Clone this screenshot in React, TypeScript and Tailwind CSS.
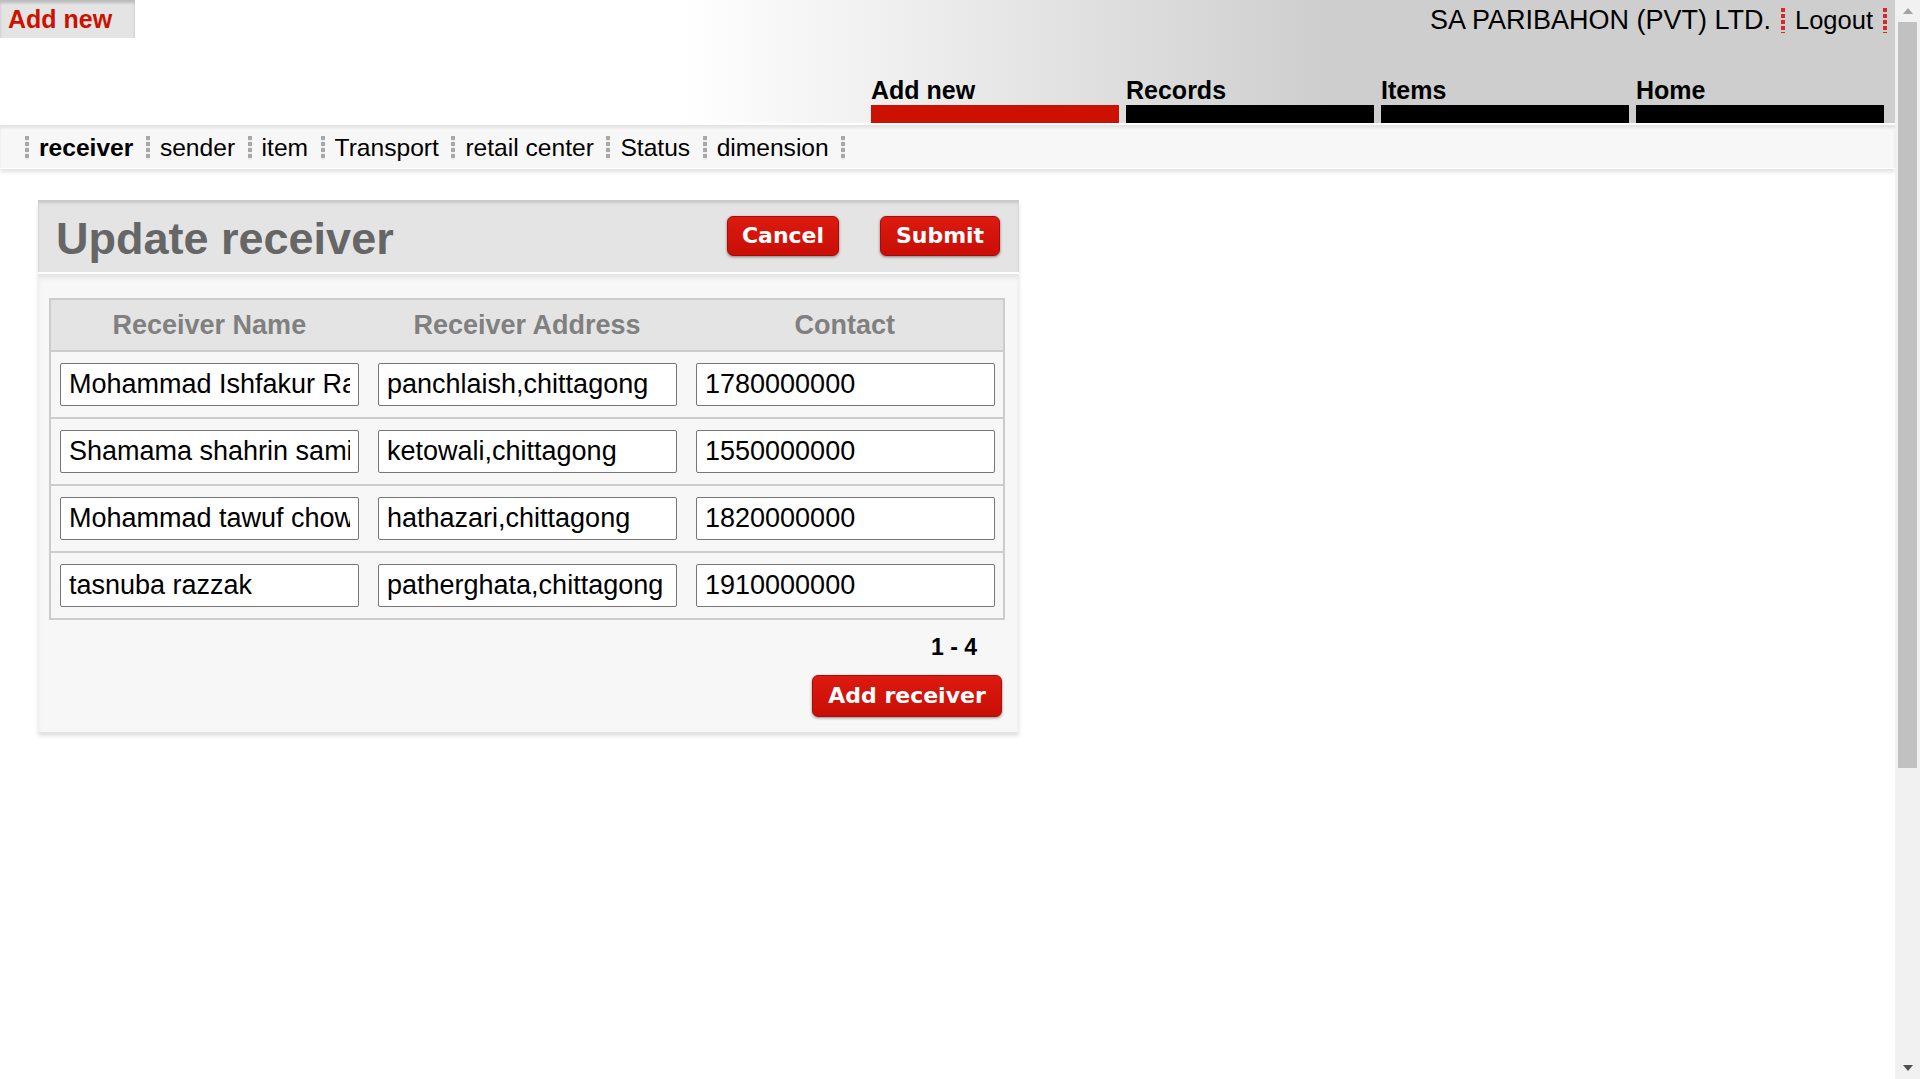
const arial = "font-['Liberation_Sans',Arial,sans-serif]";
const verdana = "font-['DejaVu_Sans',Verdana,sans-serif]";

const redSep =
  "w-[4px] h-[25px] bg-[image:repeating-linear-gradient(to_bottom,#d42a2a_0px,#d42a2a_4px,transparent_4px,transparent_6px)]";
const graySep =
  "w-[4px] h-[24px] shrink-0 bg-[image:repeating-linear-gradient(to_bottom,#a8a8a8_0px,#a8a8a8_4px,#eeeeee_4px,#eeeeee_6px)]";

const tabs = [
  { label: "Add new", active: true },
  { label: "Records", active: false },
  { label: "Items", active: false },
  { label: "Home", active: false },
];

const subnav = ["receiver", "sender", "item", "Transport", "retail center", "Status", "dimension"];

const receivers = [
  { name: "Mohammad Ishfakur Rahman", address: "panchlaish,chittagong", contact: "1780000000" },
  { name: "Shamama shahrin sami", address: "ketowali,chittagong", contact: "1550000000" },
  { name: "Mohammad tawuf chowdhury", address: "hathazari,chittagong", contact: "1820000000" },
  { name: "tasnuba razzak", address: "patherghata,chittagong", contact: "1910000000" },
];

function RedButton({ label, w, h }: { label: string; w: string; h: string }) {
  return (
    <button
      className={`${w} ${h} ${verdana} rounded-[6px] border border-[#a80c05] bg-[linear-gradient(to_bottom,#dc1a10,#c90e06)] text-[22px] font-bold leading-none text-white shadow-[0_1px_3px_rgba(0,0,0,0.45)]`}
    >
      {label}
    </button>
  );
}

function Field({ value }: { value: string }) {
  return (
    <input
      readOnly
      value={value}
      className={`${arial} h-[43px] w-[299px] rounded-[2px] border border-[#767676] bg-white px-[8px] text-[27px] text-black outline-none`}
    />
  );
}

export default function App() {
  return (
    <div className={`${arial} flex h-screen overflow-hidden bg-white text-black`}>
      <div className="flex-1 min-w-0">
        {/* Header */}
        <div className="flex h-[123px] flex-col justify-between bg-[linear-gradient(to_right,#ffffff_36%,#cecece_70%)]">
          <div className="flex items-start justify-between">
            <div className="h-[38px] w-[135px] bg-[#e4e4e4] pl-[8px] pt-[4px] shadow-[inset_0_3px_3px_rgba(0,0,0,0.18)]">
              <span className="text-[25px] font-bold leading-[30px] text-[#cc1100]">Add new</span>
            </div>
            <div className="flex items-center gap-[10px] pr-[8px] pt-[5px] leading-[30px]">
              <span className="text-[27px]">SA PARIBAHON (PVT) LTD.</span>
              <span className={redSep} />
              <span className="text-[25.5px]">Logout</span>
              <span className={redSep} />
            </div>
          </div>
          <div className="flex justify-end gap-[7px] pr-[11px]">
            {tabs.map((t) => (
              <div key={t.label} className="w-[248px]">
                <div className="text-[25px] font-bold leading-[28px] -translate-y-[1px]">{t.label}</div>
                <div className={`h-[18px] ${t.active ? "bg-[#cc1100]" : "bg-black"}`} />
              </div>
            ))}
          </div>
        </div>

        {/* Sub navigation */}
        <div className="mt-[2px] flex h-[44px] items-center border-b border-white bg-[#f7f7f7] pl-[25px] pt-[2px] shadow-[inset_0_3px_3px_rgba(0,0,0,0.08),0_3px_4px_rgba(0,0,0,0.12)]">
          {subnav.map((s, i) => (
            <div key={s} className="flex items-center">
              <span className={graySep} />
              <span className={`ml-[10px] mr-[12.5px] text-[24.6px] leading-[30px] ${i === 0 ? "font-bold" : ""}`}>{s}</span>
            </div>
          ))}
          <span className={graySep} />
        </div>

        {/* Panel */}
        <div className="ml-[38px] mt-[31px] w-[981px] bg-[#f7f7f7] shadow-[0_4px_4px_rgba(0,0,0,0.12)]">
          <div className="flex h-[74px] items-start justify-between border-b-2 border-white bg-[#e4e4e4] pl-[18px] pr-[19px] shadow-[inset_0_3px_3px_rgba(0,0,0,0.12)]">
            <h1 className="mt-[13px] text-[45px] font-bold leading-[52px] text-[#666666]">Update receiver</h1>
            <div className="mt-[16px] flex gap-[41px]">
              <RedButton label="Cancel" w="w-[112px]" h="h-[40px]" />
              <RedButton label="Submit" w="w-[120px]" h="h-[40px]" />
            </div>
          </div>

          <div className="px-[11px] pb-[15px] pt-[24px] shadow-[inset_0_4px_4px_rgba(0,0,0,0.08)]">
            <div className="w-[956px] border-2 border-[#cccccc]">
              <div className="flex h-[50px] items-center gap-[19px] bg-[#e4e4e4] px-[9px] text-[27px] font-bold text-[#808080]">
                <div className="w-[299px] text-center">Receiver Name</div>
                <div className="w-[299px] text-center">Receiver Address</div>
                <div className="w-[299px] text-center">Contact</div>
              </div>
              {receivers.map((r) => (
                <div
                  key={r.contact}
                  className="flex gap-[19px] border-t-2 border-[#cccccc] bg-[#f7f7f7] px-[9px] py-[11px]"
                >
                  <Field value={r.name} />
                  <Field value={r.address} />
                  <Field value={r.contact} />
                </div>
              ))}
            </div>

            <div className="mr-[31px] mt-[12px] text-right text-[23px] font-bold leading-[30px]">1 - 4</div>
            <div className="mt-[13px] flex justify-end pr-[6px]">
              <RedButton label="Add receiver" w="w-[190px]" h="h-[42px]" />
            </div>
          </div>
        </div>
      </div>

      {/* Scrollbar */}
      <div className="flex h-full w-[25px] shrink-0 flex-col items-center bg-[#f1f1f1]">
        <div className="flex h-[22px] items-center justify-center">
          <svg width="10" height="6" viewBox="0 0 10 6">
            <path d="M0 6 L5 0 L10 6 Z" fill="#a3a3a3" />
          </svg>
        </div>
        <div className="h-[746px] w-[19px] bg-[#c1c1c1]" />
        <div className="flex-1" />
        <div className="flex h-[22px] items-center justify-center">
          <svg width="10" height="6" viewBox="0 0 10 6">
            <path d="M0 0 L5 6 L10 0 Z" fill="#505050" />
          </svg>
        </div>
      </div>
    </div>
  );
}
